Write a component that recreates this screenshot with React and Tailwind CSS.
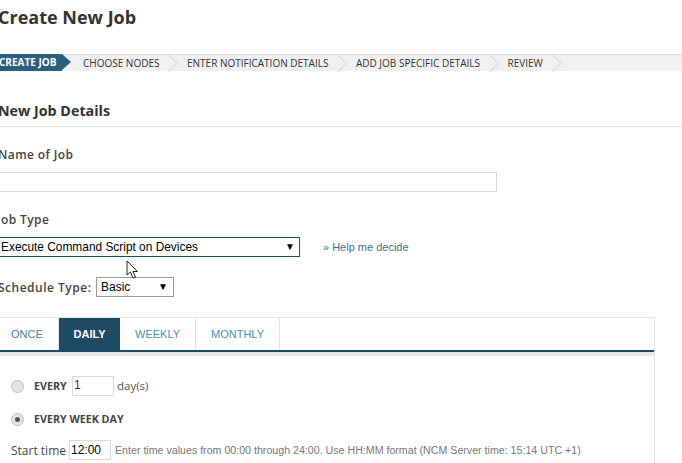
import React from 'react';

const steps = ['Choose Nodes', 'Enter Notification Details', 'Add Job Specific Details', 'Review'];
const tabs = ['Weekly', 'Monthly'];

const openSans = "font-['Open_Sans',sans-serif]";
const arial = "font-['Liberation_Sans',Arial,sans-serif]";

const Chevron = () => (
    <svg className="w-[10px] h-[17px] shrink-0 ml-[9px] mr-[8.5px]" viewBox="0 0 10 17" fill="none">
        <path d="M0.5 0L9 8.5L0.5 17" stroke="#cfcfcf" strokeWidth="1" />
    </svg>
);

const Radio = ({ checked }) => (
    <span className="w-[13px] h-[13px] rounded-full border border-[#bdbdbd] bg-[#e4e4e4] flex items-center justify-center shrink-0">
        {checked && <span className="w-[5px] h-[5px] rounded-full bg-[#555]"></span>}
    </span>
);

const Arrow = () => <span className="text-[10px] leading-none text-black">▼</span>;

const App = () => {
    return (
        <div className={`relative w-[682px] h-[463px] overflow-hidden bg-white ${openSans}`}>
            <h1 className="-ml-[2px] h-[54px] pt-[5px] text-[18px] leading-[24px] font-bold text-[#333]">Create New Job</h1>

            <div className="h-[17px] flex items-center bg-[#f1f1f1] border-t border-[#dedede] text-[10px] uppercase text-[#333]">
                <div className="relative h-[17px] -mt-px w-[62px] bg-[#2b5f7e] text-white font-bold flex items-center shrink-0 whitespace-nowrap overflow-visible">
                    <span className="-ml-[1px]">Create Job</span>
                    <span className="absolute left-[62px] top-0 border-y-[8.5px] border-l-[9px] border-y-transparent border-l-[#2b5f7e]"></span>
                </div>
                <div className="flex items-center pl-[21px]">
                    {steps.map((step) => (
                        <React.Fragment key={step}>
                            <span className="whitespace-nowrap">{step}</span>
                            <Chevron />
                        </React.Fragment>
                    ))}
                </div>
            </div>

            <div className="h-[56px] pt-[30px] border-b border-[#e6e6e0]">
                <h2 className="-ml-[2px] text-[14.3px] leading-[20px] font-bold text-[#333]">New Job Details</h2>
            </div>

            <label className="block -ml-[2px] mt-[19px] text-[12px] leading-[18px] tracking-[0.4px] font-semibold text-[#444]">Name of Job</label>
            <input className="block -ml-[2px] mt-[8px] w-[499px] h-[20px] border border-[#d9d9d9] bg-white" />

            <label className="block pl-[1px] -indent-[4px] mt-[19px] text-[12px] leading-[18px] tracking-[0.4px] font-semibold text-[#444]">Job Type</label>
            <div className="flex items-center mt-[8px]">
                <div className={`-ml-[2px] w-[302px] h-[20px] border border-[#1f4a63] flex items-center justify-between pl-[2px] pr-[4px] text-[11.9px] text-black ${arial}`}>
                    <span className="pt-[1px]">Execute Command Script on Devices</span>
                    <Arrow />
                </div>
                <a className={`ml-[23px] mt-[1px] text-[11px] text-[#3f6f8f] ${arial}`}>» Help me decide</a>
            </div>

            <div className="flex items-center mt-[20px] h-[20px]">
                <span className="-ml-[2px] pt-[1px] w-[98px] shrink-0 text-[12px] tracking-[0.5px] font-semibold text-[#444] whitespace-nowrap">Schedule Type:</span>
                <div className={`w-[78px] h-[20px] border border-[#999] flex items-center justify-between pl-[4px] pr-[5px] text-[12px] text-black ${arial}`}>
                    <span>Basic</span>
                    <Arrow />
                </div>
            </div>

            <div className={`mt-[20px] w-[655px] h-[200px] border-t border-r border-[#e4e4e4] ${arial}`}>
                <div className="flex h-[32px] border-b-[2px] border-[#1f4a63] text-[11px] uppercase box-content">
                    <div className="w-[59px] flex items-center pl-[11px] text-[#4a7c99] border-r border-[#e4e4e4]">Once</div>
                    <div className="w-[61px] flex items-center justify-center text-white font-bold bg-[#1f4a63]">Daily</div>
                    {tabs.map((tab) => (
                        <div key={tab} className="px-[15px] flex items-center text-[#4a90b8] border-r border-[#e4e4e4]">{tab}</div>
                    ))}
                </div>
                <div className="h-[4px] bg-[#e8e8e8]"></div>

                <div className="pl-[11px] pt-[20px]">
                    <div className="flex items-center h-[20px]">
                        <Radio />
                        <span className={`w-[48px] shrink-0 pl-[10px] text-[10.7px] font-bold text-[#444] ${openSans}`}>EVERY</span>
                        <div className="w-[42px] h-[20px] border border-[#d9d9d9] pl-[1px] text-[12px] leading-[16px] text-[#333]">1</div>
                        <span className={`ml-[3px] text-[11.5px] text-[#555] ${openSans}`}>day(s)</span>
                    </div>
                    <div className="flex items-center h-[20px] mt-[13px]">
                        <Radio checked />
                        <span className={`ml-[10px] text-[10.7px] font-bold text-[#444] ${openSans}`}>EVERY WEEK DAY</span>
                    </div>
                    <div className="flex items-center h-[20px] mt-[11px]">
                        <span className={`w-[58px] pt-[1px] shrink-0 text-[12px] text-[#444] whitespace-nowrap ${openSans}`}>Start time</span>
                        <div className="w-[42px] h-[20px] border border-[#d9d9d9] pl-[1px] text-[12px] leading-[18px] text-black">12:00</div>
                        <span className="ml-[4px] pt-[1px] text-[10.65px] text-[#777] whitespace-nowrap">Enter time values from 00:00 through 24:00. Use HH:MM format (NCM Server time: 15:14 UTC +1)</span>
                    </div>
                </div>
            </div>

            <svg className="absolute left-[126px] top-[260px] w-[13px] h-[20px]" viewBox="0 0 13 20">
                <path d="M1 1V15L4.5 12L7 18L9.5 17L7 11.5H11.5Z" fill="#fff" stroke="#222" strokeWidth="1" />
            </svg>
        </div>
    );
};

export default App;
